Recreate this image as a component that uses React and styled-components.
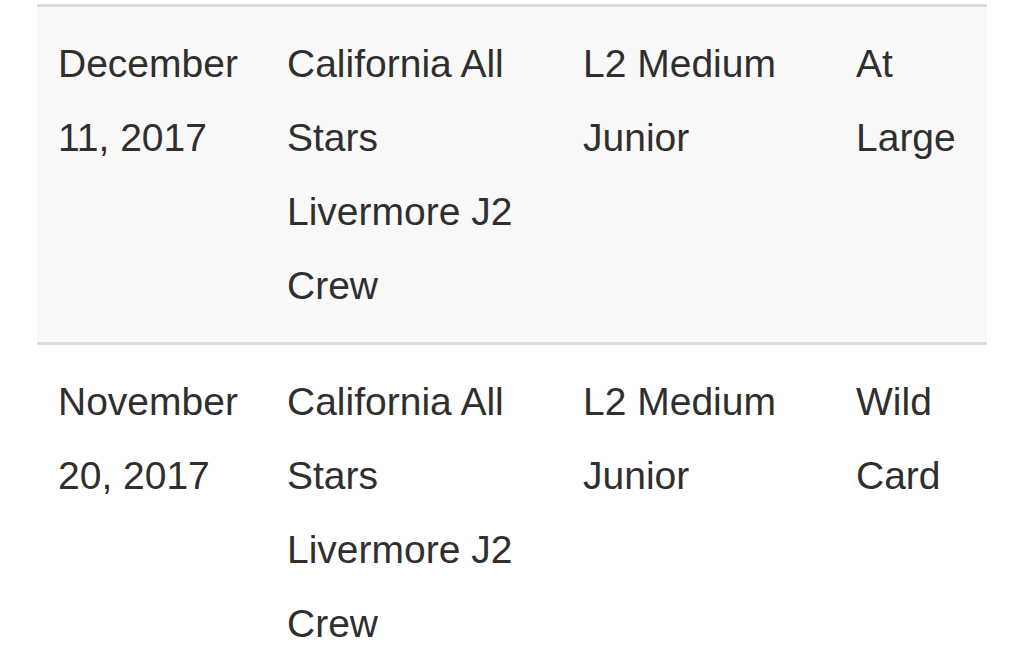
import styled, { createGlobalStyle } from "styled-components";

const GlobalStyle = createGlobalStyle`
  html, body {
    margin: 0;
    padding: 0;
    background: #fff;
  }
  body {
    font-family: "Liberation Sans", Arial, Helvetica, sans-serif;
    color: #333;
  }
`;

const Wrapper = styled.div`
  padding: 4px 37px 0 37px;
`;

const StyledTable = styled.table`
  width: 950px;
  border-collapse: collapse;
  table-layout: fixed;
  font-size: 39px;
  line-height: 74px;
`;

const StyledCol = styled.col`
  width: ${(p) => p.$width}px;
`;

const StyledRow = styled.tr`
  background: ${(p) => (p.$striped ? "#f9f9f9" : "#fff")};

  & td {
    border-top: 3px solid #ddd;
  }
`;

const StyledData = styled.td`
  padding: 20px 21px 19px;
  vertical-align: top;
  text-align: left;
  color: #2f2f2f;
`;

const columns = [229, 296, 273, 152];

const rows = [
  {
    date: "December 11, 2017",
    team: "California All Stars Livermore J2 Crew",
    division: "L2 Medium Junior",
    bid: "At Large",
  },
  {
    date: "November 20, 2017",
    team: "California All Stars Livermore J2 Crew",
    division: "L2 Medium Junior",
    bid: "Wild Card",
  },
];

export default function App() {
  return (
    <>
      <GlobalStyle />
      <Wrapper>
        <StyledTable>
          <colgroup>
            {columns.map((w, i) => (
              <StyledCol key={i} $width={w} />
            ))}
          </colgroup>
          <tbody>
            {rows.map((r, i) => (
              <StyledRow key={i} $striped={i % 2 === 0}>
                <StyledData>{r.date}</StyledData>
                <StyledData>{r.team}</StyledData>
                <StyledData>{r.division}</StyledData>
                <StyledData>{r.bid}</StyledData>
              </StyledRow>
            ))}
          </tbody>
        </StyledTable>
      </Wrapper>
    </>
  );
}
